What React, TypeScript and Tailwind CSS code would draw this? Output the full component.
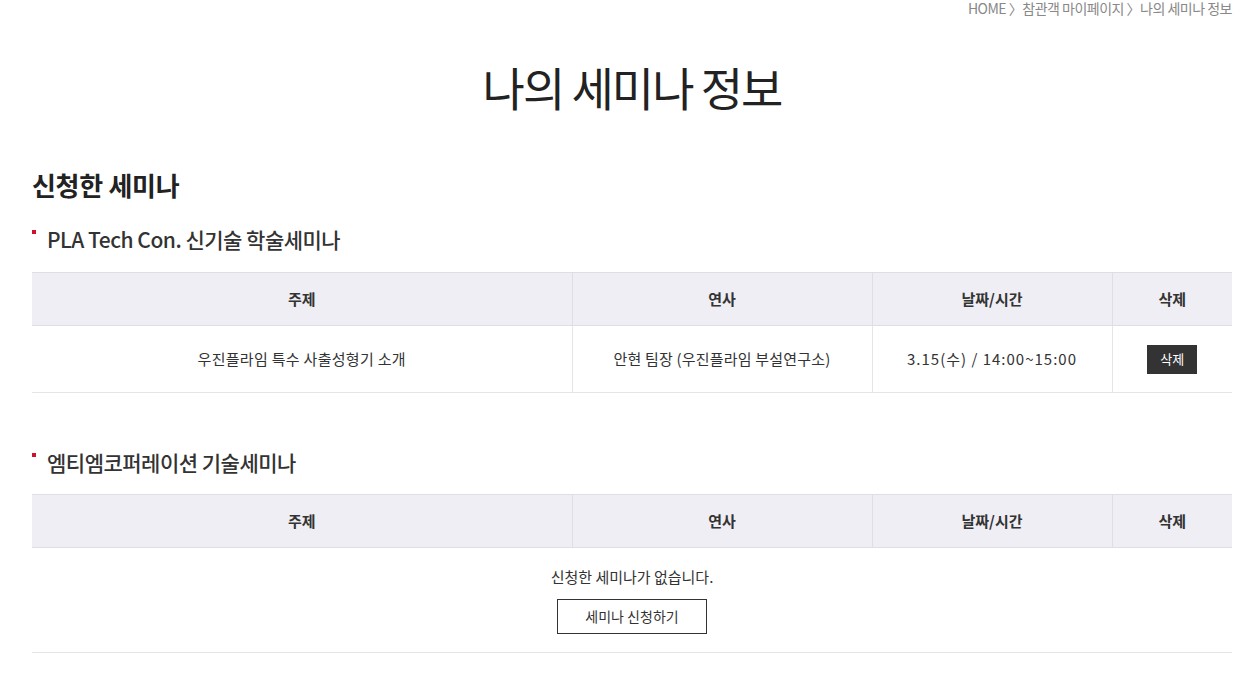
import React from 'react';

type Seminar = {
    title: string;
    speaker: string;
    date: string;
};

const FONT = { fontFamily: '"Noto Sans CJK KR", "Noto Sans", sans-serif' };

const SeminarTable: React.FC<{ rows: Seminar[] }> = ({ rows }) => (
    <table className="w-full table-fixed border-collapse text-[15px] text-[#333]">
        <colgroup>
            <col className="w-[540px]" />
            <col className="w-[300px]" />
            <col className="w-[240px]" />
            <col className="w-[120px]" />
        </colgroup>
        <thead>
            <tr className="h-[53px] bg-[#eeeef4] border-t border-b border-[#dedee4]">
                <th className="font-bold border-r border-[#dedee4]">주제</th>
                <th className="font-bold border-r border-[#dedee4]">연사</th>
                <th className="font-bold border-r border-[#dedee4]">날짜/시간</th>
                <th className="font-bold">삭제</th>
            </tr>
        </thead>
        <tbody>
            {rows.length > 0 ? (
                rows.map((r, i) => (
                    <tr key={i} className="h-[67px] border-b border-[#e5e5e5]">
                        <td className="text-center tracking-[0.3px] border-r border-[#e5e5e5]">{r.title}</td>
                        <td className="text-center tracking-[0.2px] border-r border-[#e5e5e5]">{r.speaker}</td>
                        <td className="text-center tracking-[1px] border-r border-[#e5e5e5]">{r.date}</td>
                        <td className="text-center">
                            <button className="h-[29px] w-[50px] bg-[#333] text-white text-[13px]">삭제</button>
                        </td>
                    </tr>
                ))
            ) : (
                <tr className="border-b border-[#e5e5e5]">
                    <td colSpan={4} className="text-center h-[105px]">
                        <div className="flex flex-col items-center">
                            <p className="leading-[20px]">신청한 세미나가 없습니다.</p>
                            <button className="mt-[12px] h-[35px] w-[150px] border border-[#333] bg-white text-[14px]">
                                세미나 신청하기
                            </button>
                        </div>
                    </td>
                </tr>
            )}
        </tbody>
    </table>
);

const SectionTitle: React.FC<{ children: React.ReactNode }> = ({ children }) => (
    <div className="flex items-start">
        <span className="mt-[6px] mr-[11px] h-[4px] w-[4px] bg-[#d0112b]" />
        <h3 className="text-[21px] font-medium leading-[30px] tracking-[-0.5px] text-[#333]">{children}</h3>
    </div>
);

export default function App() {
    const applied: Seminar[] = [
        {
            title: '우진플라임 특수 사출성형기 소개',
            speaker: '안현 팀장 (우진플라임 부설연구소)',
            date: '3.15(수) / 14:00~15:00',
        },
    ];

    return (
        <div className="min-h-screen bg-white" style={FONT}>
            <div className="ml-[32px] w-[1200px] pb-10">
                {/* breadcrumb */}
                <div className="flex justify-end mt-[-2px] text-[14px] leading-[20px] tracking-[-0.5px] text-[#888]">
                    HOME 〉참관객 마이페이지 〉나의 세미나 정보
                </div>

                <h1 className="mt-[41px] text-center text-[46px] leading-[54px] tracking-[-2px] text-[#222]">
                    나의 세미나 정보
                </h1>

                <h2 className="mt-[56px] text-[26px] font-bold leading-[32px] tracking-[-0.3px] text-[#222]">
                    신청한 세미나
                </h2>

                <div className="mt-[23px]">
                    <SectionTitle>PLA Tech Con. 신기술 학술세미나</SectionTitle>
                </div>
                <div className="mt-[18px]">
                    <SeminarTable rows={applied} />
                </div>

                <div className="mt-[54px]">
                    <SectionTitle>엠티엠코퍼레이션 기술세미나</SectionTitle>
                </div>
                <div className="mt-[17px]">
                    <SeminarTable rows={[]} />
                </div>
            </div>
        </div>
    );
}
